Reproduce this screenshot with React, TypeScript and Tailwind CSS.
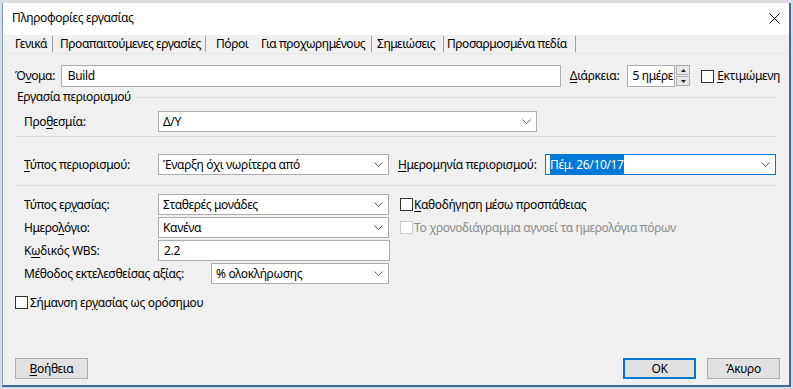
import type { ReactNode } from "react";

function K({ c }: { c: string }) {
  return <span className="underline underline-offset-[2px] decoration-[1px]">{c}</span>;
}

function Chevron() {
  return (
    <svg width="9" height="5" viewBox="0 0 9 5" className="shrink-0">
      <path d="M0.5 0.5 L4.5 4.5 L8.5 0.5" fill="none" stroke="#606060" strokeWidth="1" />
    </svg>
  );
}

function Combo({ className, children, focus = false }: { className: string; children: ReactNode; focus?: boolean }) {
  return (
    <div
      className={`flex h-[21px] items-center justify-between bg-white pl-[4px] pr-[5px] border ${
        focus ? "border-[#0078d7]" : "border-[#adadad]"
      } ${className}`}
    >
      <span className="whitespace-nowrap">{children}</span>
      <Chevron />
    </div>
  );
}

function Check({ disabled = false }: { disabled?: boolean }) {
  return (
    <span
      className={`inline-block h-[13px] w-[13px] shrink-0 border bg-white ${
        disabled ? "border-[#cccccc]" : "border-[#333333]"
      }`}
    />
  );
}

function Sep() {
  return <span className="h-[16px] w-px shrink-0 bg-[#a0a0a0]" />;
}

export default function App() {
  return (
    <div className="h-[389px] w-[793px] overflow-hidden bg-[#d9dde2] pl-[2px] pt-[3px] font-['Noto_Sans',sans-serif] text-[12px] leading-none tracking-[-0.35px] text-black">
      <div className="flex h-[384px] w-[789px] flex-col border-l border-r-2 border-b-2 border-l-[#7d9cc0] border-r-[#3f6a96] border-b-[#3f6a96] bg-[#f0f0f0]">
        {/* title bar */}
        <div className="flex h-[32px] items-center justify-between bg-white pb-[2px] pl-[9px] pr-[8px]">
          <span className="pb-px">Πληροφορίες εργασίας</span>
          <svg width="11" height="11" viewBox="0 0 11 11" className="mr-[1px]">
            <path d="M0.5 0.5 L10.5 10.5 M10.5 0.5 L0.5 10.5" stroke="#111" strokeWidth="1" />
          </svg>
        </div>

        {/* tabs */}
        <div className="flex h-[19px] items-center border-b border-[#e6e6e6] pl-[12px] whitespace-nowrap tracking-[-0.45px]">
          <span className="w-[37px]">Γενικά</span>
          <Sep />
          <span className="w-[152px] pl-[7px]">Προαπαιτούμενες εργασίες</span>
          <Sep />
          <span className="w-[55px] pl-[10px]">Πόροι</span>
          <span className="w-[110px]">Για προχωρημένους</span>
          <Sep />
          <span className="w-[71px] pl-[5px]">Σημειώσεις</span>
          <Sep />
          <span className="w-[131px] pl-[3px]">Προσαρμοσμένα πεδία</span>
          <Sep />
        </div>

        <div className="flex flex-col pl-[12px] pr-[9px]">
          {/* name row */}
          <div className="mt-[11px] flex h-[22px] items-center">
            <span className="w-[46px]">
              Ό<K c="ν" />ομα:
            </span>
            <div className="flex h-[22px] w-[503px] items-center border border-[#adadad] bg-white pl-[6px]">Build</div>
            <span className="ml-[9px] w-[57px]">
              <K c="Δ" />ιάρκεια:
            </span>
            <div className="flex h-[22px] w-[49px] items-center overflow-hidden border border-[#adadad] bg-white pl-[5px] whitespace-nowrap">
              5 ημέρε
            </div>
            <div className="ml-px flex h-[22px] w-[14px] flex-col gap-px">
              <div className="flex h-[10px] items-center justify-center border border-[#adadad] bg-[#e8e8e8]">
                <svg width="5" height="3" viewBox="0 0 5 3">
                  <path d="M0 3 L2.5 0 L5 3 Z" fill="#222" />
                </svg>
              </div>
              <div className="flex h-[10px] items-center justify-center border border-[#adadad] bg-[#e8e8e8]">
                <svg width="5" height="3" viewBox="0 0 5 3">
                  <path d="M0 0 L2.5 3 L5 0 Z" fill="#222" />
                </svg>
              </div>
            </div>
            <div className="ml-[11px] flex items-center gap-[3px]">
              <Check />
              <span>
                <K c="Ε" />κτιμώμενη
              </span>
            </div>
          </div>

          {/* group label */}
          <div className="mt-[2px] flex h-[16px] items-center pl-[2px] pr-[3px]">
            <span>Εργασία περιορισμού</span>
            <span className="ml-[6px] h-px flex-1 bg-[#dcdcdc]" />
          </div>

          <div className="mt-[6px] flex h-[21px] items-center pl-[9px]">
            <span className="w-[134px]">
              Προ<K c="θ" />εσμία:
            </span>
            <Combo className="w-[379px]">Δ/Υ</Combo>
          </div>

          <div className="mt-[4px] mr-[3px] h-px bg-[#dcdcdc]" />

          <div className="mt-[17px] flex h-[21px] items-center pl-[9px]">
            <span className="w-[134px]">
              <K c="Τ" />ύπος περιορισμού:
            </span>
            <Combo className="w-[231px]">Έναρξη όχι νωρίτερα από</Combo>
            <span className="ml-[9px] w-[147px]">
              <K c="Η" />μερομηνία περιορισμού:
            </span>
            <Combo className="w-[231px]" focus>
              <span className="bg-[#0078d7] py-[2px] text-white">Πέμ. 26/10/17</span>
            </Combo>
          </div>

          <div className="mt-[10px] mr-[3px] h-px bg-[#dcdcdc]" />

          <div className="mt-[8px] flex pl-[9px]">
            <div className="flex w-[376px] flex-col gap-[2px]">
              <div className="flex h-[21px] items-center">
                <span className="w-[134px]">
                  Τύπος ερ<K c="γ" />ασίας:
                </span>
                <Combo className="w-[231px]">Σταθερές μονάδες</Combo>
              </div>
              <div className="flex h-[21px] items-center">
                <span className="w-[134px]">
                  Ημερο<K c="λ" />όγιο:
                </span>
                <Combo className="w-[231px]">Κανένα</Combo>
              </div>
              <div className="flex h-[21px] items-center">
                <span className="w-[134px]">
                  Κ<K c="ω" />δικός WBS:
                </span>
                <div className="flex h-[21px] w-[232px] items-center border border-[#adadad] bg-white pl-[5px]">2.2</div>
              </div>
              <div className="flex h-[21px] items-center">
                <span className="w-[187px]">Μέθοδος εκτελεσθείσας αξίας:</span>
                <Combo className="w-[178px]">% ολοκλήρωσης</Combo>
              </div>
            </div>
            <div className="flex flex-col gap-[10px] pt-[4px]">
              <div className="flex items-center gap-px">
                <Check />
                <span>
                  <K c="Κ" />αθοδήγηση μέσω προσπάθειας
                </span>
              </div>
              <div className="flex items-center gap-px text-[#8d8d8d]">
                <Check disabled />
                <span>
                  Το <K c="χ" />ρονοδιάγραμμα αγνοεί τα ημερολόγια πόρων
                </span>
              </div>
            </div>
          </div>

          <div className="mt-[12px] flex items-center gap-[2px]">
            <Check />
            <span>
              Σήμανση ερ<K c="γ" />ασίας ως ορόσημου
            </span>
          </div>

          <div className="mt-[49px] flex items-center">
            <button className="flex h-[21px] w-[73px] items-center justify-center border border-[#adadad] bg-[#e1e1e1]">
              <span>
                <K c="Β" />οήθεια
              </span>
            </button>
            <div className="flex-1" />
            <button className="flex h-[21px] w-[73px] items-center justify-center border-2 border-[#0078d7] bg-[#e1e1e1]">
              OK
            </button>
            <button className="ml-[11px] flex h-[21px] w-[73px] items-center justify-center border border-[#adadad] bg-[#e1e1e1]">
              Άκυρο
            </button>
          </div>
        </div>
      </div>
    </div>
  );
}
